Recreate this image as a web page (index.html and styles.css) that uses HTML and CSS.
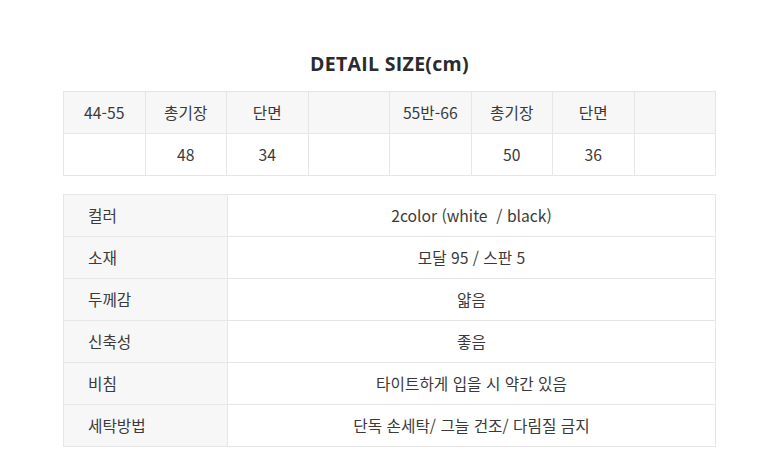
FILE: index.html
```html
<!DOCTYPE html>
<html lang="ko">
<head>
<meta charset="utf-8">
<link rel="stylesheet" href="styles.css">
</head>
<body>
<div class="wrap">
  <h2 class="title">DETAIL SIZE(cm)</h2>
  <table class="size">
    <tr class="head">
      <td>44-55</td><td>총기장</td><td>단면</td><td></td>
      <td>55반-66</td><td>총기장</td><td>단면</td><td></td>
    </tr>
    <tr>
      <td></td><td>48</td><td>34</td><td></td>
      <td></td><td>50</td><td>36</td><td></td>
    </tr>
  </table>
  <table class="info">
    <tr><th>컬러</th><td>2color (white &nbsp;/ black)</td></tr>
    <tr><th>소재</th><td>모달 95 / 스판 5</td></tr>
    <tr><th>두께감</th><td>얇음</td></tr>
    <tr><th>신축성</th><td>좋음</td></tr>
    <tr><th>비침</th><td>타이트하게 입을 시 약간 있음</td></tr>
    <tr><th>세탁방법</th><td>단독 손세탁/ 그늘 건조/ 다림질 금지</td></tr>
  </table>
</div>
</body>
</html>
```
FILE: styles.css
```css
html, body {
  margin: 0;
  padding: 0;
  background: #fff;
}
body {
  font-family: "Noto Sans CJK KR", "Noto Sans", sans-serif;
  color: #3a3a3a;
}
.wrap {
  width: 653px;
  margin-left: 63px;
  padding-top: 51px;
}
.title {
  margin: 0 0 14px;
  text-align: center;
  font-family: "Open Sans", "Noto Sans", sans-serif;
  font-weight: 700;
  font-size: 19.5px;
  line-height: 26px;
  color: #2b2b2b;
  letter-spacing: 0.3px;
}
table {
  width: 653px;
  border-collapse: collapse;
  table-layout: fixed;
  font-size: 15.7px;
}
td, th {
  border: 1px solid #e6e6e6;
  height: 41px;
  padding: 0;
  font-weight: 400;
  line-height: 20px;
  text-align: center;
}
.size .head td {
  background: #f7f7f7;
}
.info {
  margin-top: 18px;
}
.info th {
  width: 164px;
  background: #f7f7f7;
  text-align: left;
  padding-left: 24px;
  box-sizing: border-box;
}
```
